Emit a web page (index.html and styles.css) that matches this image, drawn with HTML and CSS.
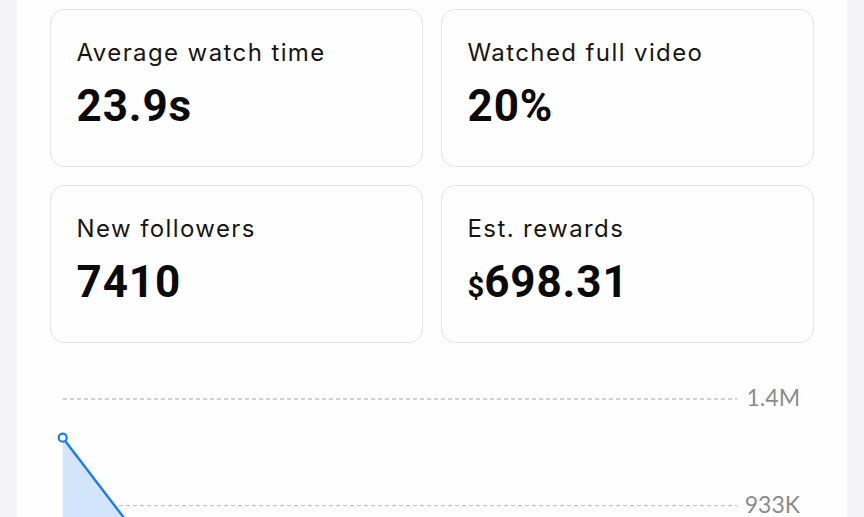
FILE: index.html
```html
<!DOCTYPE html>
<html lang="en">
<head>
<meta charset="utf-8">
<title>Analytics</title>
<link rel="stylesheet" href="styles.css">
</head>
<body>
<main class="panel">
  <section class="cards">
    <div class="card">
      <div class="card-label">Average watch time</div>
      <div class="card-value">23.9s</div>
    </div>
    <div class="card">
      <div class="card-label">Watched full video</div>
      <div class="card-value">20%</div>
    </div>
    <div class="card">
      <div class="card-label">New followers</div>
      <div class="card-value">7410</div>
    </div>
    <div class="card">
      <div class="card-label">Est. rewards</div>
      <div class="card-value"><span class="currency">$</span>698.31</div>
    </div>
  </section>
  <section class="chart">
    <svg class="chart-svg" width="830" height="174" viewBox="0 0 830 174">
      <line class="grid-line" x1="46" y1="56" x2="720" y2="56"/>
      <line class="grid-line" x1="46" y1="162.7" x2="720" y2="162.7"/>
      <text class="axis-label" x="783" y="62.7" text-anchor="end">1.4M</text>
      <text class="axis-label" x="783" y="169.7" text-anchor="end">933K</text>
      <polygon class="area" points="45.7,94.7 130,205 45.7,205"/>
      <line class="data-line" x1="45.7" y1="94.7" x2="130" y2="205"/>
      <circle class="data-point" cx="45.7" cy="94.7" r="4"/>
    </svg>
  </section>
</main>
</body>
</html>
```

FILE: styles.css
```css
html, body {
  margin: 0;
  padding: 0;
}

body {
  background: #f4f3f7;
  font-family: Roboto, "Noto Sans", sans-serif;
  color: #121212;
  height: 517px;
  overflow: hidden;
}

.panel {
  margin: 0 17px;
  width: 830px;
  background: #fefefe;
  padding-top: 9px;
  min-height: 508px;
}

.cards {
  display: grid;
  grid-template-columns: 1fr 1fr;
  gap: 18px;
  padding: 0 33px;
}

.card {
  border: 1px solid #e4e3e8;
  border-radius: 14px;
  background: #fefefe;
  padding: 28.5px 0 0 25.5px;
  box-sizing: border-box;
  height: 158px;
}

.card-label {
  font-family: Inter, Roboto, sans-serif;
  font-size: 24px;
  line-height: 28px;
  color: #161616;
  letter-spacing: 1.4px;
}

.card-value {
  margin-top: 13px;
  font-size: 44px;
  line-height: 52px;
  font-weight: 700;
  color: #0a0a0a;
  letter-spacing: 0.9px;
}

.currency {
  font-size: 29px;
  letter-spacing: 0;
}

.chart {
  display: block;
}

.chart-svg {
  display: block;
  overflow: visible;
}

.grid-line {
  stroke: #c4c4c9;
  stroke-width: 1.3;
  stroke-dasharray: 4 3;
}

.axis-label {
  font-family: Lato, "Open Sans", sans-serif;
  font-size: 23px;
  fill: #8b8b90;
}

.area {
  fill: #d3e5fb;
}

.data-line {
  stroke: #1b7cf0;
  stroke-width: 2.4;
}

.data-point {
  fill: #ffffff;
  stroke: #1b7cf0;
  stroke-width: 2.2;
}
```
